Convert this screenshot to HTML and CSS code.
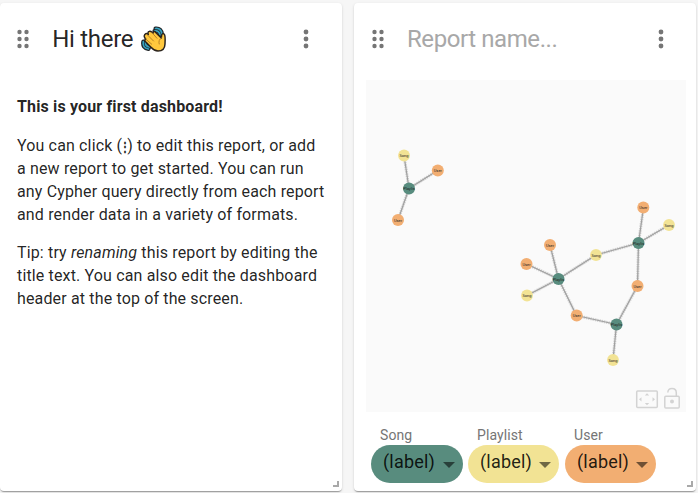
FILE: index.html
```html
<!DOCTYPE html>
<html lang="en">
<head>
<meta charset="utf-8">
<title>Dashboard</title>
<link rel="stylesheet" href="styles.css">
</head>
<body>
<main class="board">
  <section class="card">
    <header class="card-header">
      <svg class="drag" viewBox="0 0 24 24"><circle cx="8.5" cy="5" r="2.2"/><circle cx="15.5" cy="5" r="2.2"/><circle cx="8.5" cy="12" r="2.2"/><circle cx="15.5" cy="12" r="2.2"/><circle cx="8.5" cy="19" r="2.2"/><circle cx="15.5" cy="19" r="2.2"/></svg>
      <h2 class="title">Hi there</h2>
      <svg class="wave" viewBox="0 0 26 28" role="img" aria-label="Waving hand">
        <g fill="none" stroke-linecap="round">
          <path d="M14.5 3.5Q20 3 21 9M13.5 6Q18 5 19 10M2.3 16.5Q1 23 7.5 24M4.5 17.5Q4 21 8.5 22" stroke="#202326" stroke-width="4"/>
          <path d="M14.5 3.5Q20 3 21 9M13.5 6Q18 5 19 10M2.3 16.5Q1 23 7.5 24M4.5 17.5Q4 21 8.5 22" stroke="#35a2bf" stroke-width="1.7"/>
        </g>
        <path d="M3.8 9.6Q5 7.7 7 9.2L7.3 9.5Q6.4 7 8.2 6.4Q9.5 5.8 11 7.3L12 8.2Q12.2 5.8 14 6.6L20.3 13L20.7 10Q21.4 7.6 23.3 9.2Q24.5 10.4 24 19Q23.8 26 17 26Q13.2 26 10 22.3L4.6 16.8Q2.8 14.8 4.8 14.2L3.7 12.8Q2.6 11 3.8 9.6Z" fill="#ffc83d" stroke="#2b241d" stroke-width="1.5" stroke-linejoin="round"/>
        <path d="M6.5 10L12.5 16M4.9 14.2L10.7 19.2M11 7.7L16 13.3M20.3 13Q17 15 18.2 19" fill="none" stroke="#b88325" stroke-width="1" stroke-linecap="round"/>
      </svg>
      <svg class="more" viewBox="0 0 24 24"><circle cx="12" cy="5" r="2.4"/><circle cx="12" cy="12" r="2.4"/><circle cx="12" cy="19" r="2.4"/></svg>
    </header>
    <div class="markdown">
      <p><strong>This is your first dashboard!</strong></p>
      <p>You can click (<span class="dots">⋮</span>) to edit this report, or add<br>a new report to get started. You can run<br>any Cypher query directly from each report<br>and render data in a variety of formats.</p>
      <p>Tip: try <em>renaming</em> this report by editing the<br>title text. You can also edit the dashboard<br>header at the top of the screen.</p>
    </div>
    <i class="resize"></i>
  </section>

  <section class="card">
    <header class="card-header report">
      <svg class="drag" viewBox="0 0 24 24"><circle cx="8.5" cy="5" r="2.2"/><circle cx="15.5" cy="5" r="2.2"/><circle cx="8.5" cy="12" r="2.2"/><circle cx="15.5" cy="12" r="2.2"/><circle cx="8.5" cy="19" r="2.2"/><circle cx="15.5" cy="19" r="2.2"/></svg>
      <h2 class="title placeholder">Report name...</h2>
      <svg class="more" viewBox="0 0 24 24"><circle cx="12" cy="5" r="2.4"/><circle cx="12" cy="12" r="2.4"/><circle cx="12" cy="19" r="2.4"/></svg>
    </header>
    <svg class="graph" viewBox="366 80 320 332">
      <defs>
        <path id="links" d="M409 188.500L404 155.500M409 188.500L437.500 170.500M409 188.500L398 220M558.500 279L550 245M558.500 279L526.500 264M558.500 279L527 295.500M558.500 279L596 255M558.500 279L576.500 315.500M638.500 243L596 255M638.500 243L643.500 207.500M638.500 243L669 225M638.500 243L637.500 286M616.500 324.500L637.500 286M616.500 324.500L576.500 315.500M616.500 324.500L613 360"/>
      </defs>
      <use href="#links" class="link-label"/>
      <use href="#links" class="link"/>
      <g class="playlist">
        <circle cx="409" cy="188.500" r="6"/><circle cx="558.500" cy="279" r="6"/><circle cx="638.500" cy="243" r="6"/><circle cx="616.500" cy="324.500" r="6"/>
      </g>
      <g class="song">
        <circle cx="404" cy="155.500" r="5.900"/><circle cx="596" cy="255" r="5.900"/><circle cx="527" cy="295.500" r="5.900"/><circle cx="669" cy="225" r="5.900"/><circle cx="613" cy="360" r="5.900"/>
      </g>
      <g class="user">
        <circle cx="437.800" cy="170.500" r="6"/><circle cx="398" cy="220" r="6"/><circle cx="550" cy="245" r="6"/><circle cx="526.500" cy="264" r="6"/><circle cx="576.700" cy="315.500" r="6"/><circle cx="643.300" cy="207.500" r="6"/><circle cx="637.500" cy="286" r="6"/>
      </g>
      <g class="node-label">
        <text x="409" y="190">Playlis</text><text x="558.500" y="280.500">Playlis</text><text x="638.500" y="244.500">Playlis</text><text x="616.500" y="326">Playlis</text>
        <text x="404" y="157">Song</text><text x="596" y="256.500">Song</text><text x="527" y="297">Song</text><text x="669" y="226.500">Song</text><text x="613" y="361.500">Song</text>
        <text x="437.800" y="172">User</text><text x="398" y="221.500">User</text><text x="550" y="246.500">User</text><text x="526.500" y="265.500">User</text><text x="576.700" y="317">User</text><text x="643.300" y="209">User</text><text x="637.500" y="287.500">User</text>
      </g>
      <g class="tool">
        <rect x="636.700" y="391" width="20.600" height="16.500" rx="1"/>
        <path class="tool-fill" d="M644.800 395.500L647 393.200L649.200 395.500ZM644.800 403L647 405.300L649.200 403ZM641.500 397.200L639 399.300L641.500 401.400ZM652.500 397.200L655 399.300L652.500 401.400Z"/>
        <rect x="664.800" y="396.300" width="14.400" height="11.600" rx="1"/>
        <path d="M667.800 392.500Q668 388.500 672 388.500Q676.300 388.500 676.300 392.800V396"/>
        <circle class="tool-fill" cx="672" cy="401.500" r="2"/>
      </g>
    </svg>
    <div class="legend">
      <div class="field"><label>Song</label><div class="pill green">(label)<i class="caret"></i></div></div>
      <div class="field"><label>Playlist</label><div class="pill yellow">(label)<i class="caret"></i></div></div>
      <div class="field"><label>User</label><div class="pill orange">(label)<i class="caret"></i></div></div>
    </div>
    <i class="resize"></i>
  </section>
</main>
</body>
</html>
```
FILE: styles.css
```css
* { box-sizing: border-box; }
body {
  margin: 0;
  background: #f6f6f6;
  color: rgba(0, 0, 0, .87);
  font-family: Roboto, sans-serif;
  overflow: hidden;
}
.board {
  display: grid;
  grid-template-columns: 342px 342px;
  gap: 12px;
  height: 493px;
  padding: 3px 0 2px;
}
.card {
  position: relative;
  display: flex;
  flex-direction: column;
  background: #fff;
  border-radius: 4px;
  box-shadow: 0 2px 1px -1px rgba(0,0,0,.2), 0 1px 1px rgba(0,0,0,.14), 0 1px 3px rgba(0,0,0,.12);
}
.card-header {
  display: flex;
  align-items: center;
  height: 71px;
  padding: 0 24px 0 11.300px;
}
.report { padding: 0 23px 0 12px; }
.card-header svg { flex: none; }
.drag, .more { width: 24px; height: 24px; fill: #757575; }
.more { margin-left: auto; }
.title {
  margin: 0 0 0 17px;
  font-size: 24px;
  font-weight: 400;
  line-height: 28px;
  letter-spacing: -.3px;
}
.placeholder { color: #a8a8a8; letter-spacing: -.42px; }
.wave { width: 26px; height: 28px; margin-left: 8px; }
.markdown {
  padding: 22px 17px;
  font-size: 16px;
  line-height: 22.88px;
  letter-spacing: .15px;
  white-space: nowrap;
}
.markdown p { margin: 0 0 16px; }
.markdown strong { font-weight: 700; letter-spacing: .15px; }
.dots {
  display: inline-flex;
  justify-content: center;
  width: 5px;
  font-weight: 700;
  font-size: 12px;
  line-height: 1;
}
.graph {
  display: block;
  width: 320px;
  height: 332px;
  margin: 6px 0 0 12px;
  background: #fafafa;
}
.link { fill: none; stroke: #a0a0a0; stroke-width: 1.2; }
.link-label { fill: none; stroke: #d2d2d2; stroke-width: 3; stroke-dasharray: 1.5 .8; }
.playlist { fill: #588c7e; }
.song { fill: #f2e394; }
.user { fill: #f2ae72; }
.node-label { font-size: 4px; text-anchor: middle; fill: #222; }
.tool { fill: none; stroke: #d3d3d3; stroke-width: 1.5; }
.tool-fill { fill: #d3d3d3; stroke: none; }
.legend { display: flex; gap: 5px; padding: 15px 0 0 17px; }
.field { display: flex; flex-direction: column; }
.field label {
  height: 18px;
  padding-left: 9px;
  color: #757575;
  font-size: 14px;
  line-height: 17px;
  letter-spacing: .1px;
}
.pill {
  display: flex;
  align-items: center;
  width: 92px;
  height: 37.500px;
  padding: 0 8px 4px 12px;
  border-radius: 19px;
  font-size: 18px;
  letter-spacing: .2px;
}
.green { background: #588c7e; }
.yellow { width: 91px; margin-right: 1px; background: #f2e394; }
.orange { width: 91px; background: #f2ae72; }
.caret {
  margin: 6px 0 0 auto;
  border: 6px solid transparent;
  border-top-color: rgba(0, 0, 0, .54);
  border-bottom: 0;
}
.resize {
  position: absolute;
  right: 3px;
  bottom: 4px;
  width: 6px;
  height: 6px;
  border-right: 2px solid #a9a9a9;
  border-bottom: 2px solid #a9a9a9;
}
```
